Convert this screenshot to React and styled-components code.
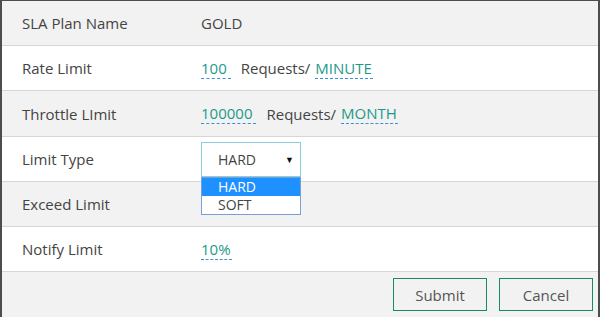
import React from 'react';
import styled, { createGlobalStyle } from 'styled-components';

const GlobalStyle = createGlobalStyle`
    html, body {
        margin: 0;
        padding: 0;
        background: #ffffff;
    }
    body {
        font-family: 'Open Sans', 'Liberation Sans', sans-serif;
    }
`;

/* --- Frame --- */
const Panel = styled.div`
    width: 600px;
    height: 317px;
    box-sizing: border-box;
    border-left: 2px solid #4d4d4d;
    border-right: 2px solid #4d4d4d;
    border-top: 1px solid #4d4d4d;
    display: flex;
    flex-direction: column;
    overflow: hidden;
`;

const Row = styled.div`
    height: ${props => (props.tall ? 46 : 45)}px;
    flex: 0 0 ${props => (props.tall ? 46 : 45)}px;
    box-sizing: border-box;
    display: flex;
    align-items: center;
    background: ${props => (props.shaded ? '#f2f2f2' : '#ffffff')};
    border-bottom: 1px solid #d6d6d6;
    position: relative;
    z-index: ${props => (props.raised ? 2 : 'auto')};
`;

const Label = styled.div`
    width: 199px;
    padding-left: 20px;
    box-sizing: border-box;
    font-size: 15px;
    color: #444444;
`;

const Value = styled.div`
    display: flex;
    align-items: center;
    font-size: 15px;
    color: #444444;
    position: relative;
`;

const Editable = styled.span`
    color: #1e9a8a;
    border-bottom: 1px dashed #3d8ed8;
    padding-right: ${props => props.pad || 4}px;
    margin-right: ${props => props.gap || 0}px;
    line-height: 20px;
`;

const Unit = styled.span`
    margin-right: 5px;
`;

/* --- Select --- */
const SelectBox = styled.div`
    width: 100px;
    height: 35px;
    box-sizing: border-box;
    border: 1px solid #86cfdc;
    background: #ffffff;
    display: flex;
    align-items: center;
    justify-content: space-between;
    padding: 0 6px 0 16px;
    font-size: 14px;
    color: #444444;
`;

const Arrow = styled.span`
    font-size: 9px;
    color: #111111;
`;

const OptionList = styled.div`
    position: absolute;
    top: 35px;
    left: 0;
    width: 100px;
    box-sizing: border-box;
    border: 1px solid #7a9fd6;
    background: #ffffff;
    z-index: 5;
`;

const Option = styled.div`
    height: 18px;
    line-height: 18px;
    padding-left: 16px;
    font-size: 14px;
    background: ${props => (props.active ? '#1e90ff' : '#ffffff')};
    color: ${props => (props.active ? '#ffffff' : '#444444')};
`;

/* --- Footer --- */
const Footer = styled.div`
    flex: 1;
    background: #f2f2f2;
    display: flex;
    justify-content: flex-end;
    align-items: center;
    gap: 12px;
    padding-right: 5px;
`;

const Button = styled.button`
    width: 94px;
    height: 33px;
    border: 1px solid #168a6b;
    background: #f2f2f2;
    color: #555555;
    font-family: inherit;
    font-size: 15px;
    cursor: pointer;
`;

export default function App() {
    return (
        <>
            <GlobalStyle />
            <Panel>
                <Row shaded>
                    <Label>SLA Plan Name</Label>
                    <Value>GOLD</Value>
                </Row>
                <Row>
                    <Label>Rate Limit</Label>
                    <Value>
                        <Editable gap={10}>100</Editable>
                        <Unit>Requests/</Unit>
                        <Editable pad={1}>MINUTE</Editable>
                    </Value>
                </Row>
                <Row shaded tall>
                    <Label>Throttle LImit</Label>
                    <Value>
                        <Editable gap={10}>100000</Editable>
                        <Unit>Requests/</Unit>
                        <Editable pad={1}>MONTH</Editable>
                    </Value>
                </Row>
                <Row raised>
                    <Label>Limit Type</Label>
                    <Value>
                        <SelectBox>
                            HARD
                            <Arrow>▼</Arrow>
                        </SelectBox>
                        <OptionList>
                            <Option active>HARD</Option>
                            <Option>SOFT</Option>
                        </OptionList>
                    </Value>
                </Row>
                <Row shaded>
                    <Label>Exceed Limit</Label>
                </Row>
                <Row>
                    <Label>Notify Limit</Label>
                    <Value>
                        <Editable pad={1}>10%</Editable>
                    </Value>
                </Row>
                <Footer>
                    <Button>Submit</Button>
                    <Button>Cancel</Button>
                </Footer>
            </Panel>
        </>
    );
}
